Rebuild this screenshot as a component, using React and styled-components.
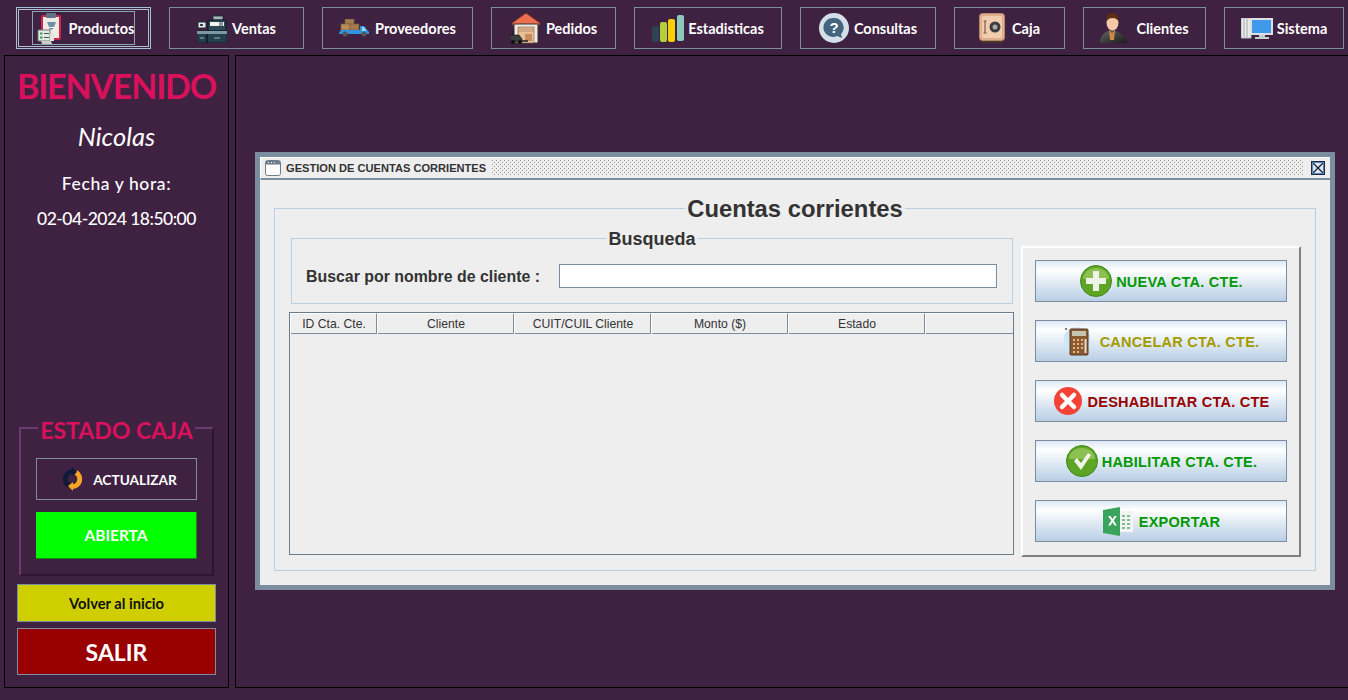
import React from 'react'
import styled, { createGlobalStyle } from 'styled-components'

const GlobalStyle = createGlobalStyle`
  html, body { margin: 0; padding: 0; height: 700px; overflow: hidden; background: #3f2142; }
  * { box-sizing: border-box; }
`

const UI_FONT = `Lato, "Open Sans", sans-serif`
const ARIAL = `"Liberation Sans", Arial, sans-serif`

const Page = styled.div`
  width: 1348px;
  height: 700px;
  background: #3f2142;
  display: flex;
  flex-direction: column;
  font-family: ${UI_FONT};
`

// top menu
const TopBar = styled.nav`
  height: 55px;
  padding: 7px 0 0 16px;
  display: flex;
  gap: 18px;
  align-items: flex-start;
`

const MenuButton = styled.button`
  position: relative;
  width: ${p => p.$w}px;
  height: 42px;
  background: transparent;
  border: ${p => (p.$active ? '3px double #a9c0d6' : '1px solid #7b8ea0')};
  color: #fff;
  font: 700 14.5px ${UI_FONT};
  display: flex;
  align-items: center;
  justify-content: center;
  gap: ${p => p.$gap || 4}px;
  padding: ${p => (p.$active ? '0 0 0 4px' : '0')};

  ${p => p.$active && `
    &::after {
      content: '';
      position: absolute;
      left: 13px;
      right: 13px;
      top: 1px;
      bottom: 1px;
      border: 1px solid #8ba3b8;
    }
  `}
`

const Body = styled.div`
  flex: 1;
  display: flex;
  gap: 6px;
  padding: 0 0 12px 4px;
`

// left column
const Side = styled.aside`
  width: 225px;
  height: 633px;
  border: 1px solid #000;
  display: flex;
  flex-direction: column;
  align-items: center;
  color: #fff;
`

const Welcome = styled.h1`
  margin: 9px 0 0;
  font: 700 34px/42px ${UI_FONT};
  letter-spacing: -1.2px;
  color: #d9115c;
`

const UserName = styled.div`
  margin-top: 13px;
  font: italic 400 25.5px/32px ${UI_FONT};
`

const DateLine = styled.div`
  margin-top: ${p => p.$top}px;
  font: 500 17.5px/24px ${UI_FONT};
  letter-spacing: ${p => p.$spacing}px;
`

const CashBox = styled.fieldset`
  margin: 183px 0 0;
  padding: 16px 15px 0;
  width: 195px;
  height: 162px;
  border: 2px solid #6a3a70;
  border-bottom-color: #2e1531;
  border-right-color: #2e1531;
  display: flex;
  flex-direction: column;
  gap: 12px;

  legend {
    margin: 0 auto;
    padding: 4px 2px 0;
    font: 700 23px/24px ${UI_FONT};
    white-space: nowrap;
    color: #d9115c;
  }
`

const RefreshButton = styled.button`
  height: 42px;
  width: 161px;
  flex: none;
  padding: 0 0 0 6px;
  background: transparent;
  border: 1px solid #7b8ea0;
  color: #fff;
  font: 700 13.7px ${UI_FONT};
  display: flex;
  align-items: center;
  justify-content: center;
  gap: 10px;
`

const StatusButton = styled.button`
  height: 47px;
  width: 161px;
  flex: none;
  background: #00ff00;
  border: 0;
  border-right: 1px solid #0a8a0a;
  border-bottom: 1px solid #0a8a0a;
  color: #fff;
  font: 700 15.5px ${UI_FONT};
`

const SideButton = styled.button`
  width: 199px;
  height: ${p => p.$h}px;
  flex: none;
  margin-top: ${p => p.$top}px;
  background: ${p => p.$bg};
  border: 1px solid #7b8ea0;
  color: ${p => p.$fg};
  font: 700 ${p => p.$size}px ${UI_FONT};
`

// desktop and internal window
const Desktop = styled.main`
  width: 1113px;
  height: 633px;
  border: 1px solid #000;
  border-right: 0;
  padding: 96px 0 0 19px;
`

const Window = styled.section`
  width: 1080px;
  height: 438px;
  border: 5px solid #7b8ea0;
  background: #eeeeee;
  display: flex;
  flex-direction: column;
`

const TitleBar = styled.header`
  height: 23px;
  flex: none;
  border-bottom: 2px solid #7b8ea0;
  border-top: 1px solid #fff;
  border-left: 1px solid #fff;
  display: flex;
  align-items: center;
  padding: 0 5px 0 4px;
  gap: 5px;
  font: 700 11.100px ${ARIAL};
  color: #333;
`

const Bumps = styled.div`
  flex: 1;
  height: 16px;
  margin: 0 2px 0 1px;
  background-color: #eeeeee;
  background-image:
    radial-gradient(circle at 0.5px 0.5px, #9a9a9a 0.7px, transparent 0.8px),
    radial-gradient(circle at 0.5px 0.5px, #9a9a9a 0.7px, transparent 0.8px);
  background-size: 4px 4px;
  background-position: 0 0, 2px 2px;
`

const CloseBox = styled.button`
  width: 14px;
  height: 14px;
  padding: 0;
  border: 1px solid #1d2a3a;
  outline: 1px solid #5b87c0;
  outline-offset: -2px;
  background: #dbe6f0;
  display: flex;
  align-items: center;
  justify-content: center;
`

const WindowBody = styled.div`
  flex: 1;
  padding: 14px 16px 14px 14px;
`

const MainGroup = styled.fieldset`
  margin: 0;
  padding: 6px 16px 0;
  width: 1042px;
  min-width: 0;
  height: 377px;
  border: 1px solid #b8cfe4;
  display: flex;
  gap: 7px;

  legend {
    margin: 0 auto;
    padding: 2px 2px 0;
    font: 700 23.800px/26px ${ARIAL};
    color: #333;
  }
`

const LeftCol = styled.div`
  width: 725px;
  flex: none;
  margin-left: -2px;
  display: flex;
  flex-direction: column;
  gap: 8px;
`

const SearchGroup = styled.fieldset`
  margin: 0 0 0 2px;
  padding: 16px 14px 0;
  width: 722px;
  min-width: 0;
  height: 76px;
  border: 1px solid #b8cfe4;
  display: flex;
  align-items: center;
  gap: 19px;

  legend {
    margin: 0 auto;
    padding: 2px 2px 0;
    font: 700 18px/18px ${ARIAL};
    color: #333;
  }
`

const SearchLabel = styled.label`
  width: 234px;
  flex: none;
  margin-top: 2px;
  font: 700 15.900px ${ARIAL};
  color: #333;
  white-space: nowrap;
`

const SearchInput = styled.input`
  width: 438px;
  height: 24px;
  flex: none;
  background: #fff;
  border: 1px solid #7b8ea0;
`

const Table = styled.div`
  height: 243px;
  border: 1px solid #6b7c8c;
`

const TableHead = styled.div`
  display: grid;
  grid-template-columns: 87px 137px 137px 137px 137px 1fr;
  height: 21px;
  border-bottom: 1px solid #7b8ea0;
`

const HeadCell = styled.div`
  padding-left: 1px;
  border-right: 1px solid #7b8ea0;
  border-left: 1px solid #fff;
  border-top: 1px solid #fff;
  font: 400 12.200px/20px ${ARIAL};
  color: #333;
  text-align: center;
  &:last-child { border-right: 0; }
`

const ActionPanel = styled.div`
  width: 280px;
  height: 311px;
  flex: none;
  margin-top: 18px;
  border: 2px solid;
  border-color: #fff #808080 #808080 #fff;
  padding: 12px 12px 0;
  display: flex;
  flex-direction: column;
  gap: 18px;
`

const ActionButton = styled.button`
  width: 252px;
  height: 42px;
  flex: none;
  padding: 0 0 0 1px;
  border: 1px solid #7b8ea0;
  background: linear-gradient(#dde8f3 0%, #ffffff 22%, #e4edf5 50%, #b9cfe5 100%);
  color: ${p => p.$fg};
  font: 700 14.500px ${ARIAL};
  letter-spacing: 0.25px;
  display: flex;
  align-items: center;
  justify-content: center;
  gap: ${p => p.$gap}px;
`

const ActionLabel = styled.span`
  padding-top: 2px;
`

// icons
const ProductsIcon = () => (
  <svg width="24" height="31" viewBox="0 0 24 31">
    <rect x="5" y="3" width="18" height="23" rx="1" fill="#efeae4" stroke="#d0234e" strokeWidth="2" />
    <rect x="9" y="0" width="10" height="5" rx="1" fill="#5a7486" />
    <path d="M10 9h9l-2 5h-5zM12 15h4v1.500h-4z" fill="#6f8fa3" />
    <path d="M1 17h12v11H1z" fill="#e3ece4" stroke="#6d7d72" />
    <path d="M3 19.500h2.500v2H3zM3 23.500h2.500v2H3z" fill="#3f9a62" />
    <path d="M7 20.500h5M7 24.500h5" stroke="#555" />
    <path d="M4 28h10l1 3H5z" fill="#c7cec8" />
    <path d="M13 21h4v7h-4z" fill="#dfe4df" />
  </svg>
)

const SalesIcon = () => (
  <svg width="30" height="29" viewBox="0 0 30 29">
    <rect x="19" y="0" width="3" height="4" fill="#1d2c35" />
    <rect x="16" y="2" width="10" height="4" fill="#a7b5bb" stroke="#1d2c35" strokeWidth=".8" />
    <rect x="11" y="6" width="18" height="11" rx="1" fill="#2c4755" stroke="#0f1c23" />
    <rect x="13" y="8" width="14" height="4" fill="#f3f1ea" />
    <path d="M22 8h4v4h-4z" fill="#8a9aa3" />
    <rect x="1" y="8" width="8" height="6" fill="#e4e9ea" stroke="#1d2c35" />
    <path d="M3 10h3v2H3z" fill="#30424d" />
    <path d="M0 17h30v12H0z" fill="#24404f" stroke="#0f1c23" />
    <path d="M0 17h30v3H0z" fill="#7c97a5" />
    <path d="M10 20v9" stroke="#0d1a22" strokeWidth="1.500" />
    <path d="M3 24h4M17 24h6" stroke="#9fb3bd" />
  </svg>
)

const TruckIcon = () => (
  <svg width="31" height="18" viewBox="0 0 31 18">
    <rect x="6" y="0" width="9" height="5" fill="#a47a4f" stroke="#7c5a38" strokeWidth=".6" />
    <rect x="2" y="5" width="9" height="6" fill="#b58a5c" stroke="#7c5a38" strokeWidth=".6" />
    <rect x="11" y="5" width="9" height="6" fill="#a47a4f" stroke="#7c5a38" strokeWidth=".6" />
    <path d="M0 14l2-3h19V7h4l5 6v2H0z" fill="#2f95e0" />
    <path d="M23 8h2l2.500 4H23z" fill="#9fd3f5" />
    <circle cx="6" cy="15" r="2.500" fill="#555" />
    <circle cx="25" cy="15" r="2.500" fill="#555" />
  </svg>
)

const WarehouseIcon = () => (
  <svg width="30" height="32" viewBox="0 0 30 32">
    <path d="M2 11L16 1l14 10v2H2z" fill="#ec6f50" stroke="#7a2d1c" />
    <rect x="4" y="12" width="24" height="19" fill="#f0ece4" stroke="#333" />
    <rect x="8" y="15" width="16" height="16" fill="#eabf98" stroke="#7d5a3c" strokeWidth=".6" />
    <path d="M8 17h16M8 19h16" stroke="#9a7652" strokeWidth=".6" />
    <rect x="15" y="22" width="7" height="7" fill="#c48d5b" />
    <path d="M3 19v11" stroke="#222" strokeWidth="1.500" />
    <path d="M0 23h9l3 4v3H0z" fill="#3d3d3d" stroke="#111" strokeWidth=".6" />
    <path d="M12 29h6" stroke="#222" strokeWidth="1.500" />
    <circle cx="3" cy="30" r="2" fill="#111" />
    <circle cx="10" cy="30" r="2" fill="#111" />
  </svg>
)

const ChartIcon = () => (
  <svg width="32" height="27" viewBox="0 0 32 27">
    <rect x="0" y="11" width="7" height="16" rx="2" fill="#2d4356" />
    <rect x="8" y="7" width="7" height="20" rx="2" fill="#b5cf3c" />
    <rect x="16" y="4" width="7" height="23" rx="2" fill="#f5cf08" />
    <rect x="25" y="0" width="7" height="26" rx="2" fill="#8ec8bd" />
  </svg>
)

const HelpIcon = () => (
  <svg width="30" height="30" viewBox="0 0 30 30">
    <circle cx="15" cy="15" r="15" fill="#d5dfe8" />
    <path d="M15 5a9.500 9.500 0 0 1 7 16l1 4-5-2A9.500 9.500 0 1 1 15 5z" fill="#45647f" />
    <text x="15" y="20" textAnchor="middle" fontFamily="Liberation Sans" fontWeight="700" fontSize="15" fill="#fff">?</text>
  </svg>
)

const SafeIcon = () => (
  <svg width="26" height="30" viewBox="0 0 26 30">
    <rect x="0.500" y="0.500" width="25" height="27" rx="3" fill="#dfae8c" stroke="#b98a68" />
    <rect x="3" y="3" width="20" height="22" rx="2" fill="#f1cdb0" />
    <circle cx="16" cy="14" r="5.500" fill="#3d3d3d" />
    <circle cx="16" cy="14" r="2.500" fill="#aaa" />
    <path d="M6 8v12M4.500 8h3M4.500 20h3" stroke="#7a5c44" strokeWidth="1.200" />
    <path d="M2 28h22v2H2z" fill="#4a3526" />
  </svg>
)

const PersonIcon = () => (
  <svg width="28" height="31" viewBox="0 0 28 31">
    <defs>
      <linearGradient id="suit" x1="0" y1="0" x2="1" y2="1">
        <stop offset="0" stopColor="#666" />
        <stop offset="1" stopColor="#1a1a1a" />
      </linearGradient>
    </defs>
    <path d="M0 30c0-8 4-11 11-13h2c7 2 12 6 15 13z" fill="url(#suit)" />
    <path d="M9 17l3 3 3-3-1 10h-4z" fill="#c98a45" />
    <ellipse cx="12.500" cy="9.500" rx="6" ry="8" fill="#f5c9a8" />
    <path d="M6.500 9c-1-6 2-9 6-9s7 3 6 9c-1-3-3-4-6-4s-5 1-6 4z" fill="#5a2f16" />
  </svg>
)

const ComputerIcon = () => (
  <svg width="32" height="21" viewBox="0 0 32 21">
    <rect x="0" y="0" width="10" height="20" fill="#e8eaec" stroke="#b5b8bb" />
    <path d="M3 1v18M6 1v18" stroke="#aaa" />
    <rect x="9" y="0" width="23" height="17" fill="#dbe0e3" />
    <rect x="11" y="2" width="19" height="13" fill="#3f98ea" />
    <path d="M18 17h6v2h4v2H14v-2h4z" fill="#c8cccf" />
  </svg>
)

const RefreshIcon = () => (
  <svg width="21" height="24" viewBox="0 0 21 24">
    <path d="M11 4.500A7.500 7.500 0 0 0 7 18.500" fill="none" stroke="#10193a" strokeWidth="5" />
    <path d="M10 19.500A7.500 7.500 0 0 0 14 5.500" fill="none" stroke="#f6a623" strokeWidth="5" />
    <path d="M10 0l5 5-5 4z" fill="#10193a" />
    <path d="M11 24l-5-5 5-4z" fill="#f6a623" />
  </svg>
)

const PlusBadge = () => (
  <svg width="32" height="32" viewBox="0 0 32 32">
    <circle cx="16" cy="16" r="15.500" fill="#5ea526" stroke="#3f8a1a" />
    <path d="M3 14a13 11 0 0 1 26 0z" fill="#8cc152" />
    <path d="M13 6h6v7h7v6h-7v7h-6v-7H6v-6h7z" fill="#eef3e8" />
  </svg>
)

const CalculatorIcon = () => (
  <svg width="26" height="30" viewBox="0 0 26 30">
    <circle cx="13" cy="15" r="14" fill="#cfe6f5" />
    <circle cx="2" cy="3" r="1" fill="#553" />
    <rect x="6" y="3" width="18" height="26" rx="1" fill="#8a5a32" stroke="#5a3a20" />
    <rect x="8" y="5" width="14" height="5" fill="#c8c4b4" />
    <path d="M9 13h2v2H9zM13 13h2v2h-2zM17 13h2v2h-2zM9 17h2v2H9zM13 17h2v2h-2zM17 17h2v2h-2zM9 21h2v2H9zM13 21h2v2h-2zM17 21h2v2h-2zM9 25h2v2H9zM13 25h2v2h-2z" fill="#e8b27a" />
    <rect x="20.500" y="13" width="2" height="14" fill="#ddd" />
  </svg>
)

const CrossBadge = () => (
  <svg width="28" height="28" viewBox="0 0 28 28">
    <circle cx="14" cy="14" r="14" fill="#f44336" />
    <path d="M8 8l12 12M20 8L8 20" stroke="#fff" strokeWidth="4.500" strokeLinecap="round" />
  </svg>
)

const CheckBadge = () => (
  <svg width="32" height="32" viewBox="0 0 32 32">
    <circle cx="16" cy="16" r="15.500" fill="#5ea526" stroke="#3f8a1a" />
    <path d="M3 14a13 11 0 0 1 26 0z" fill="#8cc152" />
    <path d="M8 16l3-3 4 5 7-10 3 2-10 15z" fill="#f2f5ee" />
  </svg>
)

const ExcelIcon = () => (
  <svg width="30" height="29" viewBox="0 0 30 29">
    <rect x="16" y="4" width="14" height="21" fill="#f2f5f2" />
    <path d="M19 8h3v2h-3zM24 8h3v2h-3zM19 12h3v2h-3zM24 12h3v2h-3zM19 16h3v2h-3zM24 16h3v2h-3zM19 20h3v2h-3zM24 20h3v2h-3z" fill="#7fbb93" />
    <path d="M0 3l17-3v29L0 26z" fill="#3aa35c" />
    <path d="M5 9l2.500 0 2 3 2-3h2.300l-3.100 4.500 3.200 5h-2.400l-2-3.200-2 3.200H5.100l3.200-5z" fill="#fff" />
  </svg>
)

const WindowIcon = () => (
  <svg width="16" height="16" viewBox="0 0 16 16">
    <rect x="0.500" y="0.500" width="15" height="15" rx="2" fill="#fff" stroke="#6b7c8c" />
    <rect x="1" y="1" width="14" height="3.500" fill="#6b7c8c" />
    <path d="M3 2.500h1M6 2.500h1M9 2.500h1" stroke="#fff" />
  </svg>
)

const menu = [
  { label: 'Productos', w: 135, icon: <ProductsIcon />, active: true, gap: 8 },
  { label: 'Ventas', w: 135, icon: <SalesIcon />, gap: 5 },
  { label: 'Proveedores', w: 151, icon: <TruckIcon />, gap: 5 },
  { label: 'Pedidos', w: 125, icon: <WarehouseIcon />, gap: 6 },
  { label: 'Estadisticas', w: 148, icon: <ChartIcon />, gap: 4 },
  { label: 'Consultas', w: 136, icon: <HelpIcon />, gap: 5 },
  { label: 'Caja', w: 111, icon: <SafeIcon />, gap: 7 },
  { label: 'Clientes', w: 123, icon: <PersonIcon />, gap: 8 },
  { label: 'Sistema', w: 120, icon: <ComputerIcon />, gap: 4 },
]

const columns = ['ID Cta. Cte.', 'Cliente', 'CUIT/CUIL Cliente', 'Monto ($)', 'Estado', '']

const actions = [
  { label: 'NUEVA CTA. CTE.', fg: '#009900', icon: <PlusBadge />, gap: 4 },
  { label: 'CANCELAR CTA. CTE.', fg: '#a39b00', icon: <CalculatorIcon />, gap: 10 },
  { label: 'DESHABILITAR CTA. CTE', fg: '#990000', icon: <CrossBadge />, gap: 6 },
  { label: 'HABILITAR CTA. CTE.', fg: '#009900', icon: <CheckBadge />, gap: 4 },
  { label: 'EXPORTAR', fg: '#009900', icon: <ExcelIcon />, gap: 6 },
]

export default function App() {
  return (
    <Page>
      <GlobalStyle />
      <TopBar>
        {menu.map(item => (
          <MenuButton key={item.label} $w={item.w} $active={item.active} $gap={item.gap}>
            {item.icon}
            {item.label}
          </MenuButton>
        ))}
      </TopBar>

      <Body>
        <Side>
          <Welcome>BIENVENIDO</Welcome>
          <UserName>Nicolas</UserName>
          <DateLine $top={20} $spacing={0.6}>Fecha y hora:</DateLine>
          <DateLine $top={11} $spacing={-0.5}>02-04-2024 18:50:00</DateLine>

          <CashBox>
            <legend>ESTADO CAJA</legend>
            <RefreshButton><RefreshIcon />ACTUALIZAR</RefreshButton>
            <StatusButton>ABIERTA</StatusButton>
          </CashBox>

          <SideButton $h={38} $top={8} $bg="#cfcf00" $fg="#111" $size={14.7}>Volver al inicio</SideButton>
          <SideButton $h={47} $top={6} $bg="#990000" $fg="#fff" $size={23}>SALIR</SideButton>
        </Side>

        <Desktop>
          <Window>
            <TitleBar>
              <WindowIcon />
              <span>GESTION DE CUENTAS CORRIENTES</span>
              <Bumps />
              <CloseBox aria-label="Cerrar">
                <svg width="12" height="12" viewBox="0 0 12 12">
                  <path d="M1 1l10 10M11 1L1 11" stroke="#10202f" strokeWidth="1.200" />
                </svg>
              </CloseBox>
            </TitleBar>

            <WindowBody>
              <MainGroup>
                <legend>Cuentas corrientes</legend>
                <LeftCol>
                  <SearchGroup>
                    <legend>Busqueda</legend>
                    <SearchLabel>Buscar por nombre de cliente :</SearchLabel>
                    <SearchInput />
                  </SearchGroup>
                  <Table>
                    <TableHead>
                      {columns.map((c, i) => <HeadCell key={i}>{c}</HeadCell>)}
                    </TableHead>
                  </Table>
                </LeftCol>
                <ActionPanel>
                  {actions.map(a => (
                    <ActionButton key={a.label} $fg={a.fg} $gap={a.gap}>
                      {a.icon}
                      <ActionLabel>{a.label}</ActionLabel>
                    </ActionButton>
                  ))}
                </ActionPanel>
              </MainGroup>
            </WindowBody>
          </Window>
        </Desktop>
      </Body>
    </Page>
  )
}
